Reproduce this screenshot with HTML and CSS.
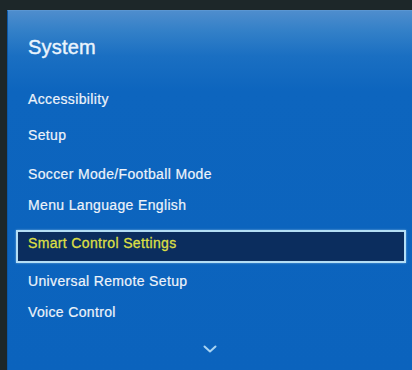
FILE: index.html
```html
<!DOCTYPE html>
<html lang="en">
<head>
<meta charset="utf-8">
<title>System</title>
<link rel="stylesheet" href="styles.css">
</head>
<body>
<div class="panel">
  <h1 class="title">System</h1>
  <ul class="menu">
    <li class="item first">Accessibility</li>
    <li class="item g6">Setup</li>
    <li class="item g9">Soccer Mode/Football Mode</li>
    <li class="item g1">Menu Language English</li>
    <li class="item selected">Smart Control Settings</li>
    <li class="item g3">Universal Remote Setup</li>
    <li class="item g1">Voice Control</li>
  </ul>
  <div class="more">
    <svg width="14" height="8" viewBox="0 0 14 8"><path d="M1.5 1.5 L7 6.5 L12.5 1.5" fill="none" stroke="#a9d4f2" stroke-width="2" stroke-linecap="round" stroke-linejoin="round"/></svg>
  </div>
</div>
</body>
</html>
```
FILE: styles.css
```css
html, body {
  margin: 0;
  padding: 0;
  height: 100%;
}
body {
  background: #1d2729;
  padding: 10px 0 0 7px;
  box-sizing: border-box;
  font-family: "Liberation Sans", Arial, sans-serif;
  overflow: hidden;
}
.panel {
  height: 100%;
  box-sizing: border-box;
  padding: 24px 0 0 20px;
  background: linear-gradient(180deg, #4e8dcd 0px, #3380c8 20px, #1a6fc2 45px, #0d65be 80px, #0b63bd 100%);
  border-top: 1px solid #5a96d2;
  border-left: 1px solid #0a58a8;
  display: flex;
  flex-direction: column;
}
.title {
  margin: 0;
  font-size: 20px;
  line-height: 24px;
  font-weight: normal;
  color: #eaf4fd;
  letter-spacing: 0.2px;
  -webkit-text-stroke: 0.4px #eaf4fd;
}
.menu {
  list-style: none;
  margin: 0;
  padding: 0;
  display: flex;
  flex-direction: column;
}
.item {
  height: 30px;
  line-height: 30px;
  font-size: 14px;
  letter-spacing: 0.35px;
  color: #edf3fa;
  -webkit-text-stroke: 0.2px #edf3fa;
}
.first { margin-top: 25px; }
.g1 { margin-top: 1px; }
.g3 { margin-top: 3px; }
.g6 { margin-top: 6px; }
.g9 { margin-top: 9px; }
.selected {
  margin: 10px 6px 0 -12px;
  height: 33px;
  box-sizing: border-box;
  line-height: 23px;
  padding: 0 0 6px 10px;
  border: 2px solid #b4def5;
  background: #0b2d5e;
  color: #dcdf45;
  -webkit-text-stroke: 0.3px #dcdf45;
  box-shadow: 0 0 2px rgba(180, 222, 245, 0.6);
}
.more {
  display: flex;
  justify-content: center;
  margin: 18px 0 0 -20px;
}
.more svg { display: block; }
```
